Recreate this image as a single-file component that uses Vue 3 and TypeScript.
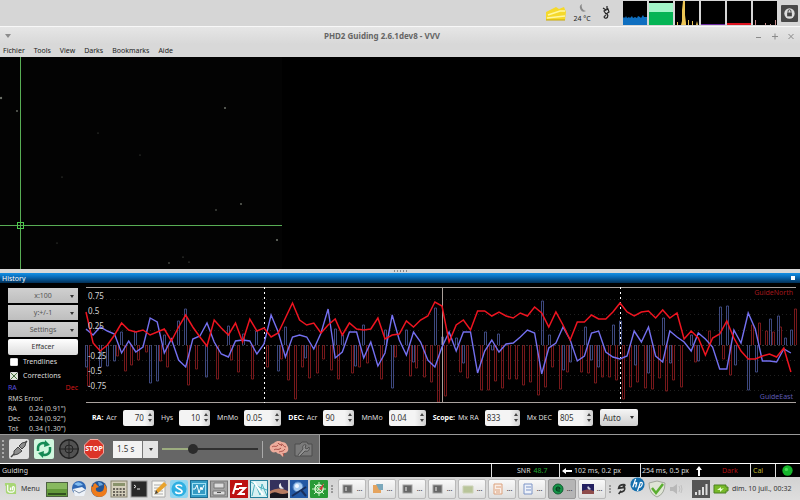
<script setup lang="ts">
import { ref } from 'vue'

type Bar = [x: number, y: number]

const menus = ['Fichier', 'Tools', 'View', 'Darks', 'Bookmarks', 'Aide']

const originX = 6
const step = 7.12
const top = 287
const zero = 345 - top

const decTrace = [
  312, 343, 351, 345, 335, 323, 330, 332, 330, 335, 332, 329, 341, 327, 315, 327, 337, 346, 320, 328,
  335, 323, 342, 319, 331, 328, 337, 333, 318, 303, 320, 325, 323, 333, 325, 319, 335, 323, 329, 330,
  329, 318, 339, 335, 334, 321, 327, 320, 316, 302, 306, 342, 325, 320, 330, 311, 311, 316, 312, 316,
  318, 313, 316, 307, 313, 327, 312, 325, 340, 322, 322, 315, 319, 319, 312, 303, 312, 316, 312, 311,
  318, 310, 318, 313, 339, 331, 338, 355, 338, 334, 321, 338, 351, 359, 359, 356, 354, 357, 348, 372,
]
const raTrace = [
  329, 335, 327, 331, 334, 353, 341, 352, 347, 318, 322, 353, 339, 360, 367, 339, 336, 323, 342, 354,
  357, 341, 340, 341, 354, 344, 315, 332, 357, 337, 335, 337, 349, 333, 309, 358, 352, 332, 332, 358,
  342, 366, 353, 315, 340, 355, 332, 342, 360, 367, 347, 332, 351, 332, 332, 373, 351, 340, 352, 344,
  343, 337, 330, 333, 374, 348, 343, 327, 340, 361, 356, 333, 331, 352, 357, 359, 356, 331, 342, 327,
  356, 362, 331, 337, 342, 351, 333, 339, 347, 369, 369, 330, 343, 313, 329, 361, 361, 362, 349, 353,
]

const decBars: Bar[] = [
  [89, 386], [118, 356], [126, 371], [132, 365], [139, 360], [147, 352], [161, 361], [168, 367], [189, 385],
  [197, 369], [218, 379], [232, 360], [239, 372], [253, 379], [268, 367], [282, 359], [289, 380], [296, 399],
  [303, 367], [310, 378], [318, 373], [324, 359], [332, 370], [339, 379], [353, 373], [360, 367], [368, 363],
  [382, 379], [396, 357], [411, 376], [417, 368], [425, 377], [432, 382], [439, 402], [446, 396], [461, 372],
  [468, 378], [482, 390], [489, 390], [496, 381], [503, 388], [510, 379], [517, 379], [524, 385], [531, 382],
  [539, 395], [546, 387], [553, 367], [561, 389], [568, 372], [582, 372], [589, 373], [596, 383], [603, 377],
  [610, 377], [617, 380], [624, 399], [631, 387], [638, 382], [646, 388], [653, 389], [660, 378], [667, 391],
  [674, 380], [682, 387], [696, 362], [724, 359], [731, 375], [710, 331], [753, 325], [760, 323], [767, 331],
  [774, 332], [781, 327], [796, 309],
]
const raBars: Bar[] = [
  [87, 367], [101, 367], [108, 366], [115, 361], [122, 332], [136, 332], [151, 383], [158, 381], [165, 335],
  [179, 321], [186, 309], [207, 377], [229, 326], [244, 334], [257, 331], [279, 371], [286, 327], [306, 358],
  [336, 329], [343, 335], [356, 366], [364, 325], [386, 330], [393, 388], [407, 330], [414, 362], [436, 308],
  [443, 337], [457, 338], [464, 363], [486, 332], [493, 350], [499, 334], [543, 301], [550, 335], [564, 370],
  [571, 362], [586, 327], [592, 360], [599, 367], [614, 325], [621, 321], [636, 365], [649, 373], [664, 318],
  [671, 363], [692, 335], [699, 361], [721, 307], [728, 306], [736, 365], [749, 390], [757, 372], [771, 319],
  [779, 316], [786, 338], [792, 330],
]

const toPoints = (values: number[]): string =>
  values.map((v, i) => `${(originX + i * step).toFixed(1)},${v - top}`).join(' ')
const barPath = (bars: Bar[]): string =>
  bars.map(([x, y]) => `M${x - 81.5} ${zero}V${y - top}h2V${zero}`).join('')

const gridRows = [12, 27, 43, 73, 88, 103]
const scale = [
  { text: '0.75', row: 1 }, { text: '0.5', row: 2 }, { text: '0.25', row: 3 },
  { text: '-0.25', row: 5 }, { text: '-0.5', row: 6 }, { text: '-0.75', row: 7 },
]

const stars = [
  [1, 41, 1.2], [17, 54, 0.9], [225, 51, 1], [241, 147, 0.9], [216, 153, 0.8], [277, 183, 1.1],
  [169, 206, 0.8], [183, 200, 0.6], [189, 205, 0.6], [98, 76, 0.5], [62, 120, 0.5], [140, 98, 0.5], [57, 186, 0.5],
]

const trendlines = ref(false)
const corrections = ref(true)
const exposure = ref(30)

const rms = [
  ['RA', '0.24 (0.91")'],
  ['Dec', '0.24 (0.92")'],
  ['Tot', '0.34 (1.30")'],
]

const settings = [
  { id: 'ra-agr', group: 'RA:', label: 'Acr', value: '70', size: 'small', right: true },
  { id: 'ra-hys', group: '', label: 'Hys', value: '10', size: 'small', right: true },
  { id: 'ra-min', group: '', label: 'MnMo', value: '0.05', size: 'large', right: false },
  { id: 'dec-agr', group: 'DEC:', label: 'Acr', value: '90', size: 'small', right: false },
  { id: 'dec-min', group: '', label: 'MnMo', value: '0.04', size: 'large', right: false },
  { id: 'mx-ra', group: 'Scope:', label: 'Mx RA', value: '833', size: 'medium', right: false },
  { id: 'mx-dec', group: '', label: 'Mx DEC', value: '805', size: 'medium', right: false },
]

const windows = ['term', 'paint', 'term', 'term', 'folder', 'doc-o', 'doc-b', 'phd', 'moon']
</script>

<template>
  <div class="desktop">
    <header class="panel">
      <svg class="note" viewBox="0 0 22 16"><path d="M1 7 11 2l3 2 5-2 2 5-1 8H1z" fill="#f5d92c" /><path d="M3 10 15 6l5 0M2 13l18-2" stroke="#fff7a0" stroke-width="1.500" fill="none" /><path d="M1 15h19" stroke="#c9a800" /></svg>
      <div class="weather">
        <svg viewBox="0 0 10 10"><path d="M5 1a4 4 0 1 0 4 7A5 5 0 0 1 5 1z" fill="#8b8b8b" /></svg>
        <span>24 °C</span>
      </div>
      <svg class="plug" viewBox="0 0 10 16"><path d="M2 3l3 2M6 1v3M3 6l4-2 1 3-3 2zM6 9c2 2 0 5-2 4s0-3 1-2" fill="none" stroke="#222" stroke-width="1.2" /></svg>
      <div class="monitors">
        <svg viewBox="0 0 24 24"><path d="M0 0h24v24H0z" /><path d="M0 24v-7l1-1 1 1 1-2 1 2 2-1 1 1 2-2 1 2 2-1 2 1 1-2 2 1 1 1 2-3 1 2 2 0 1 0v8z" fill="#0f6fc0" /></svg>
        <svg viewBox="0 0 24 24"><path d="M0 0h24v24H0z" /><path d="M0 2h24v10H0z" fill="#a2f5c8" /><path d="M0 11h24v13H0z" fill="#05b455" /></svg>
        <svg viewBox="0 0 24 24"><path d="M0 0h24v24H0z" /><path d="M2 24v-3h1v3M6 24l1-4V9l1-9h2v14l1 8v2zM13 24v-5h1v5M17 24v-4h1v4M21 24l1-4 1 4z" fill="#edc655" /></svg>
        <svg viewBox="0 0 24 24"><path d="M0 0h24v24H0z" /><path d="M0 23h24v1H0z" fill="#6b2aa0" /></svg>
        <svg viewBox="0 0 24 24"><path d="M0 0h24v24H0z" /><path d="M0 22h24v2H0z" fill="#dd1420" /></svg>
        <svg viewBox="0 0 24 24"><path d="M0 0h24v24H0z" /><path d="M2.500 24v-5M12.500 24v-2M22.500 24v-5M17.500 24v-1" stroke="#c98c8c" /></svg>
      </div>
      <svg class="lock" viewBox="0 0 18 18"><rect width="18" height="18" rx="1" fill="#484848" /><circle cx="9" cy="9" r="5.500" fill="#ddd" /><rect x="6.500" y="8" width="5" height="4" fill="#444" /><path d="M7.500 8V6.500a1.500 1.500 0 0 1 3 0V8" fill="none" stroke="#444" /></svg>
    </header>

    <div class="titlebar">
      <svg class="wm-menu" viewBox="0 0 8 6"><path d="M1 1h6L4 5z" fill="#8c8c8c" /></svg>
      <h1>PHD2 Guiding 2.6.1dev8 - VVV</h1>
      <div class="wm">
        <button aria-label="Réduire"><svg viewBox="0 0 8 8"><path d="M1 5.500h5" /></svg></button>
        <button aria-label="Agrandir"><svg viewBox="0 0 8 8"><path d="M1 4.500h6M4 1.500v6" /></svg></button>
        <button aria-label="Fermer"><svg viewBox="0 0 8 8"><path d="M1.500 2l5 5M6.500 2l-5 5" /></svg></button>
      </div>
    </div>
    <nav class="menubar"><button v-for="m in menus" :key="m">{{ m }}</button></nav>

    <main class="view">
      <svg class="frame" viewBox="0 0 282 212">
        <rect width="282" height="212" fill="#030303" />
        <circle v-for="(s, i) in stars" :key="i" :cx="s[0]" :cy="s[1]" :r="s[2]" fill="#6c7168" />
        <path d="M20.500 0v212M0 168.500h282" stroke="#58ad55" />
        <rect x="17.500" y="165.500" width="6" height="6" fill="none" stroke="#4cc94c" />
      </svg>
    </main>
    <div class="sash"><i></i><i></i><i></i><i></i><i></i></div>

    <section class="history">
      <div class="caption"><h2>History</h2><button class="pin" aria-label="Fermer l'historique"></button></div>
      <div class="body">
        <aside>
          <div class="drop"><select aria-label="Échelle x"><option>x:100</option></select></div>
          <div class="drop"><select aria-label="Échelle y"><option>y:+/-1</option></select></div>
          <div class="drop"><button>Settings</button></div>
          <button class="clear">Effacer</button>
          <label class="tick"><input v-model="trendlines" type="checkbox" />Trendlines</label>
          <label class="tick"><input v-model="corrections" type="checkbox" />Corrections</label>
          <div class="legend"><span class="ra">RA</span><span class="dec">Dec</span></div>
          <div class="rms">RMS Error:</div>
          <div v-for="r in rms" :key="r[0]" class="rms"><span>{{ r[0] }}</span><span>{{ r[1] }}</span></div>
        </aside>
        <div class="plot">
          <div class="graph">
            <svg viewBox="0 0 718 116" preserveAspectRatio="none">
              <path v-for="g in gridRows" :key="g" :d="`M6 ${g}.500H716`" stroke="#202020" stroke-dasharray="1 3" />
              <path :d="`M6 ${zero}.500H716`" stroke="#353535" stroke-dasharray="2 2" />
              <path :d="barPath(decBars)" fill="none" stroke="#831b1e" stroke-width="0.9" />
              <path :d="barPath(raBars)" fill="none" stroke="#44508c" stroke-width="0.9" />
              <path d="M6 .5H716M6 115.500H716" stroke="#a9a29e" />
              <path d="M362.500 0v116" stroke="#aaa09a" />
              <path d="M184.500 0v116M540.500 0v116" stroke="#fff" stroke-dasharray="2 3" />
              <polyline :points="toPoints(raTrace)" fill="none" stroke="#7470f0" stroke-width="1.4" />
              <polyline :points="toPoints(decTrace)" fill="none" stroke="#ee1420" stroke-width="1.5" />
            </svg>
            <div class="scale"><span v-for="s in scale" :key="s.text" :class="'row' + s.row">{{ s.text }}</span></div>
            <span class="north">GuideNorth</span>
            <span class="east">GuideEast</span>
          </div>
          <form class="params" @submit.prevent>
            <div v-for="s in settings" :key="s.id" class="param">
              <label :for="s.id"><b v-if="s.group">{{ s.group }}</b> {{ s.label }}</label>
              <span class="spin" :class="s.size">
                <input :id="s.id" type="text" inputmode="decimal" :value="s.value" :class="{ right: s.right }" />
                <svg viewBox="0 0 8 15"><path d="M2 6l2-3 2 3zM2 9l2 3 2-3z" fill="#444" /></svg>
              </span>
            </div>
            <div class="mode"><select aria-label="Mode Dec"><option>Auto</option></select></div>
          </form>
        </div>
      </div>
    </section>

    <div class="tools">
      <div class="toolbar">
        <i class="grip"></i>
        <button class="tool light" aria-label="Connecter"><svg viewBox="0 0 20 20"><path d="M2 18l4-4M14 6l4-4" stroke="#444" stroke-width="1.500" /><path d="M5 12l4-4 4 4-4 3-4 1zM10 7l3-3 4-1-1 4-3 3z" fill="#8c8c8c" stroke="#444" /></svg></button>
        <button class="tool green" aria-label="Boucle"><svg viewBox="0 0 20 20"><path d="M4 12V9a5 5 0 0 1 8-4M16 8v3a5 5 0 0 1-8 4" fill="none" stroke="#168a55" stroke-width="2.500" /><path d="M11 1l5 5-6 2zM9 19l-5-5 6-2z" fill="#168a55" /></svg></button>
        <button class="tool" aria-label="Guider"><svg viewBox="0 0 20 20"><circle cx="10" cy="10" r="9.300" fill="#525252" stroke="#1f1f1f" stroke-width="1.400" /><circle cx="10" cy="10" r="4" fill="none" stroke="#222" /><path d="M10 1v18M1 10h18" stroke="#222" /></svg></button>
        <button class="tool stop" aria-label="Arrêter"><svg viewBox="0 0 20 20"><path d="M6 .5h8L19.500 6v8L14 19.500H6L.5 14V6z" fill="#dc3428" stroke="#f3aaa0" /></svg><span>STOP</span></button>
        <div class="exposure"><select aria-label="Exposition"><option>1.5 s</option></select></div>
        <input v-model="exposure" class="gamma" type="range" aria-label="Gamma" />
        <i class="sep"></i>
        <button class="tool" aria-label="Paramètres avancés"><svg viewBox="0 0 20 20"><path d="M1 10C0 6 3 5 5 4c3-3 6-2 8-1 4 0 5 3 6 5 1 4-1 6-4 6l-1 4-3-3c-2 0-3-1-4-2-3 1-5 0-6-3z" fill="#edac9c" /><path d="M3 8c2-2 4 1 6-2M5 11c2-2 4 1 7-2M9 4c1 2 3 1 4 3M12 5c3 0 2 3 5 3M10 13c2-1 4 0 6-3M14 14l1 3" fill="none" stroke="#a74c45" /></svg></button>
        <button class="tool" aria-label="Caméra"><svg viewBox="0 0 20 20"><path d="M1 5h5l2-2h5l1 2h4v12H1z" fill="#7a7a7a" stroke="#4d4d4d" /><path d="M4 16l5-6c-1-3 1-5 3-4l-1 3 2 1 2-2c1 3-1 5-4 4l-5 5" fill="#929292" stroke="#505050" /></svg></button>
      </div>
    </div>

    <div class="status">
      <span class="msg">Guiding</span>
      <span class="cell snr">SNR <em>48.7</em></span>
      <span class="cell ramove"><svg viewBox="0 0 10 8"><path d="M0 4l4-3v2h6v2H4v2z" fill="#fff" /></svg>102 ms, 0.2 px</span>
      <span class="cell decmove">254 ms, 0.5 px<svg viewBox="0 0 8 10"><path d="M4 0l3 4H5v6H3V4H1z" fill="#fff" /></svg></span>
      <span class="dark">Dark</span>
      <span class="cell cal">Cal</span>
      <span class="cell led"><svg viewBox="0 0 10 10"><circle cx="5" cy="5" r="4.700" fill="#16b52c" /><circle cx="4" cy="4" r="1.500" fill="#47df55" /></svg></span>
    </div>

    <footer class="taskbar">
      <button class="start"><svg viewBox="0 0 14 14"><path d="M1 1h9a3 3 0 0 1 3 3v9H5a3 3 0 0 1-3-3V4H1z" fill="#a8d675" /><path d="M4 3v6q0 2 2 2h3q2 0 2-2V6q0-1-1-1t-1 1v3M7 9V6" fill="none" stroke="#fff" stroke-width="1.300" /></svg>Menu</button>
      <div class="launchers">
        <button class="wide" aria-label="Bureau"><svg viewBox="0 0 22 18"><rect x=".5" y="2.500" width="21" height="14" fill="#639a3a" stroke="#4d6141" /><path d="M1 3h20v6H1z" fill="#88b95f" /><path d="M2 14h18" stroke="#31511f" stroke-width="2" /></svg></button>
        <button aria-label="Messagerie"><svg viewBox="0 0 18 18"><circle cx="9" cy="8" r="7" fill="#2e67b4" /><path d="M3 9l9-2 4 3-2 6-9 0z" fill="#edf2f8" /><path d="M4 10l5 3 6-3" fill="none" stroke="#7b8ea8" /><path d="M4 4q5-4 9 1l-5 1z" fill="#83bdf0" /></svg></button>
        <button aria-label="Navigateur"><svg viewBox="0 0 18 18"><circle cx="9" cy="9" r="8" fill="#245493" /><path d="M1 6q0 11 8 11t8-8q-1-4-3-5 1 7-4 8-5 0-4-4l3-1-4-4q-2 1-2 4z" fill="#ee7b1b" /><path d="M8 2q4 0 5 3l-4 1z" fill="#69a5dd" /></svg></button>
        <button aria-label="Calculatrice"><svg viewBox="0 0 18 18"><rect x="1" y="1" width="16" height="16" fill="#d6d0bd" stroke="#88836f" /><path d="M3 3h12v3H3z" fill="#8a936c" /><path d="M3 9h12M3 12h12M3 15h12" stroke="#68635a" stroke-width="2" stroke-dasharray="2 1.300" /></svg></button>
        <button aria-label="Terminal"><svg viewBox="0 0 18 18"><rect x="1" y="1" width="16" height="16" fill="#292929" stroke="#9c9c9c" /><path d="M4 5l2 1.500L4 8M7 9h3" fill="none" stroke="#eee" /></svg></button>
        <button aria-label="Éditeur"><svg viewBox="0 0 18 18"><path d="M2 1h13v16H2z" fill="#f8f8f4" stroke="#aaa" /><path d="M4 5h9M4 8h9M4 11h9M4 14h9" stroke="#aaa" /><path d="M5 14l1-4 8-8 3 3-9 8z" fill="#e9a22c" /><path d="M5 14l1-4 2 3z" fill="#444" /></svg></button>
        <button aria-label="Skype"><svg viewBox="0 0 18 18"><rect width="18" height="18" rx="2" fill="#8fd6f0" /><circle cx="9" cy="9" r="7.500" fill="#2fb0e2" /><path d="M12 6.500c-1-2-6-2-6 0s6 2.500 6 5-6 2.500-6.500 0" fill="none" stroke="#fff" stroke-width="1.600" /></svg></button>
        <button aria-label="Moniteur"><svg viewBox="0 0 18 18"><rect x=".5" y=".5" width="17" height="17" fill="#349bc4" stroke="#1d6e93" /><rect x="2.500" y="3.500" width="13" height="11" fill="none" stroke="#9ce0f5" /><path d="M3 9h2l2-4 2 8 2-6 1 3 2-5" fill="none" stroke="#fff" /></svg></button>
        <button aria-label="Fichiers"><svg viewBox="0 0 18 18"><rect x=".5" y="1" width="17" height="16" fill="#a3a3a3" stroke="#777" /><path d="M4 3h10v5H4zM3 11h12v4H3z" fill="#ddd" stroke="#777" /><path d="M7 12.500h4" stroke="#555" /></svg></button>
        <button aria-label="FileZilla"><svg viewBox="0 0 18 18"><rect width="18" height="18" fill="#bd1112" /><path d="M3 14L6 4h6M5 9h4M9 8h6l-6 6h6" fill="none" stroke="#fff" stroke-width="2" /></svg></button>
        <button aria-label="Cartes"><svg viewBox="0 0 18 18"><rect x=".5" y=".5" width="17" height="17" fill="#d9f1f3" stroke="#267f9b" /><path d="M2 16L5 3l5 12L12 4l5 12M1 2l8 5 8 3" fill="none" stroke="#4fb3c0" /><path d="M4 2l9 13" stroke="#fff" stroke-width="2" /></svg></button>
        <button aria-label="Stellarium"><svg viewBox="0 0 18 18"><rect width="18" height="18" fill="#34315d" /><path d="M0 11q9-5 18 0v3H0z" fill="#b67b62" /><path d="M0 14q4-3 8-1t10 0v5H0z" fill="#17151e" /><path d="M11 3a3 3 0 1 0 3 5 4 4 0 0 1-3-5" fill="#eee" /></svg></button>
        <button aria-label="Recherche"><svg viewBox="0 0 18 18"><rect width="18" height="18" fill="#2358a4" /><circle cx="8" cy="7" r="5" fill="#a9ccf1" stroke="#5183c2" /><path d="M2 16l14-9M11 10l5 6" stroke="#182e5c" stroke-width="2" /><circle cx="7" cy="6" r="2" fill="#f2f8ff" /></svg></button>
        <button aria-label="Boussole"><svg viewBox="0 0 18 18"><rect width="18" height="18" rx="1" fill="#289a36" /><circle cx="9" cy="9" r="4" fill="none" stroke="#e4f7df" stroke-width="1.500" /><path d="M9 2v14M2 9h14M4 4l10 10M4 14L14 4" stroke="#c8efc2" /><path d="M9 9l5-6-2 7z" fill="#cf3434" /></svg></button>
      </div>
      <i class="dots"></i>
      <div class="windows">
        <button v-for="(w, i) in windows" :key="i" :class="{ active: w === 'phd' }">
          <svg viewBox="0 0 12 12">
            <g v-if="w === 'term'"><rect x="1" y="2" width="9" height="8" fill="#666" stroke="#a3a3a3" /><path d="M3 4h2v4H3z" fill="#aaa" /></g>
            <g v-else-if="w === 'paint'"><rect x="1" y="2" width="8" height="8" fill="#e5a45f" /><path d="M4 1h7v6H7z" fill="#7ba8bb" /></g>
            <path v-else-if="w === 'folder'" d="M1 3h10v7H1z" fill="#b9c59a" stroke="#ccd2b7" />
            <path v-else-if="w === 'doc-o'" d="M2 1h8v10H2zM4 4h5M3 7h5M4 9h4" fill="#f9eee7" stroke="#dca17c" />
            <path v-else-if="w === 'doc-b'" d="M2 1h8v10H2zM4 4h5M4 7h5" fill="#eef2fa" stroke="#7c94c6" />
            <g v-else-if="w === 'phd'"><circle cx="6" cy="6" r="5" fill="#149447" stroke="#125b31" /><path d="M4 6h4q0-2-2-2T4 6t2 2h2" fill="none" stroke="#05321a" /></g>
            <g v-else><path d="M0 1h12v10H0z" fill="#221f60" /><path d="M0 8q5-3 12 0v3H0z" fill="#8f4d4c" /><path d="M6 3a2 2 0 1 0 3 3" fill="#ccd" /></g>
          </svg>
          <span>...</span>
        </button>
      </div>
      <i class="dots"></i>
      <div class="tray">
        <svg class="sync" viewBox="0 0 12 16"><path d="M10 3Q3 2 2 7l7-1q2 5-6 6M10 3l-3 3M2 14l3-4" fill="none" stroke="#333" stroke-width="2" /></svg>
        <svg class="hp" viewBox="0 0 16 16"><circle cx="8" cy="8" r="7.500" fill="#1470ae" /><path d="M6 2L3 11M5 7q3-2 2 0l-1 4M11 6l-3 9M10.500 6q4-1 2 3-1 2-3 2" fill="none" stroke="#fff" stroke-width="1.300" /></svg>
        <svg class="shield" viewBox="0 0 18 18"><path d="M9 1l8 2q0 11-8 14Q1 14 1 3z" fill="#dfe5d5" stroke="#a1a79a" /><path d="M4 8l4 5 7-9" fill="none" stroke="#59ae2e" stroke-width="2.500" /></svg>
        <svg class="sound" viewBox="0 0 14 14"><path d="M1 5h3l4-3v10L4 9H1z" fill="#b8b8b8" /><path d="M10 4q2 3 0 6M12 3q2 4 0 8" fill="none" stroke="#c0c0c0" /></svg>
        <svg class="net" viewBox="0 0 18 18"><rect width="18" height="18" fill="#555" /><path d="M4 15v-3M7.500 15v-5M11 15V7M14.500 15V4" stroke="#ddd" stroke-width="2" /></svg>
        <svg class="battery" viewBox="0 0 16 10"><path d="M1 1h12v2h2v4h-2v2H1z" fill="#77b929" stroke="#4c8123" /><path d="M4 6l4-3v2l3-1-4 4V6z" fill="#e9ffd0" /></svg>
        <time>dim. 10 juil., 00:32</time>
      </div>
    </footer>
  </div>
</template>

<style>
body { margin: 0; background: #000; }
</style>

<style scoped>
* { box-sizing: border-box; }
.desktop { display: flex; flex-direction: column; min-height: 100vh; background: #000; color: #ddd; font: 7px/10px "Noto Sans", sans-serif; overflow: hidden; }
button, select, input { font: inherit; color: inherit; margin: 0; padding: 0; border: 0; background: none; border-radius: 0; }
select { appearance: none; }
svg { display: block; flex: none; }
h1, h2 { margin: 0; }

.panel { display: flex; align-items: center; justify-content: flex-end; height: 26px; padding-right: 2px; background: #d6d6d6; color: #222; }
.note { width: 22px; height: 20px; margin-right: 4px; }
.weather { display: flex; flex-direction: column; align-items: center; width: 22px; margin-right: 8px; }
.weather svg { width: 10px; height: 12px; }
.plug { width: 10px; height: 16px; margin-right: 12px; }
.monitors { display: flex; gap: 2px; margin-right: 4px; }
.monitors svg { width: 24px; height: 24px; }
.lock { width: 17px; height: 17px; }

.titlebar { display: grid; grid-template-columns: 8px 1fr 48px; align-items: center; height: 18px; padding-left: 4px; background: linear-gradient(#e6e6e6, #d8d8d8); border-top: 1px solid #f8f8f8; color: #656565; }
.titlebar h1 { font-size: 8px; line-height: 12px; text-align: center; }
.wm-menu { width: 8px; height: 6px; }
.wm { display: flex; gap: 8px; justify-content: flex-end; padding-right: 5px; }
.wm button, .wm svg { width: 8px; height: 8px; }
.wm svg { fill: none; stroke: #8a8a8a; }
.menubar { display: flex; gap: 9px; height: 13px; padding: 0 3px; background: #d8d8d8; color: #222; }
.menubar button { line-height: 11px; }

.view { flex: 1; min-height: 212px; background: #000; }
.frame { width: 282px; height: 212px; }
.sash { display: flex; justify-content: center; align-items: center; gap: 2px; height: 4px; background: #d8d8d8; }
.sash i { width: 1px; height: 2px; background: #888; }

.caption { display: flex; align-items: center; justify-content: space-between; height: 10px; padding: 0 5px 0 2px; background: linear-gradient(#1590e4, #086bb8 40%, #022f55); color: #fff; }
.caption h2 { font-size: 7px; line-height: 9px; font-weight: 400; }
.pin { width: 4px; height: 4px; background: #fff; }
.body { display: flex; height: 151px; overflow: hidden; }
aside { flex: none; width: 80px; padding: 5px 2px 0 8px; }
.drop { position: relative; height: 15px; margin-bottom: 2px; background: linear-gradient(#d0d0d0, #bebebe); color: #555; }
.drop select, .drop button { display: block; width: 100%; height: 15px; text-align: center; text-align-last: center; }
.drop::after, .mode::after, .exposure::after { content: ""; position: absolute; right: 4px; top: 7px; border: 2px solid transparent; border-top: 3px solid #333; pointer-events: none; }
.clear { display: block; width: 100%; height: 16px; border-radius: 2px; background: linear-gradient(#fff, #dcdcdc); color: #333; }
.tick { display: flex; align-items: center; gap: 5px; height: 14px; padding-left: 2px; }
.tick input { appearance: none; width: 8px; height: 8px; background: #fff; border: 1px solid #ddd; border-radius: 1px; }
.tick input:checked { background: linear-gradient(45deg, transparent 42%, #476b42 42% 58%, transparent 58%), linear-gradient(-45deg, #dce8d5 42%, #476b42 42% 58%, #dce8d5 58%); }
.legend { display: flex; justify-content: space-between; height: 11px; }
.ra { color: #5850dc; }
.dec { color: #d01818; }
.rms { display: flex; height: 10px; color: #ccc; }
.rms span:first-child { width: 21px; }

.plot { flex: 1; min-width: 0; padding-top: 4px; }
.graph { position: relative; height: 116px; padding-right: 2px; }
.graph svg { width: 100%; height: 116px; }
.scale { position: absolute; left: 8px; top: 1px; display: grid; grid-template-rows: repeat(7, 15px); font-size: 8px; line-height: 15px; color: #d5d5d5; }
.row1 { grid-row: 1; }
.row2 { grid-row: 2; }
.row3 { grid-row: 3; }
.row5 { grid-row: 5; }
.row6 { grid-row: 6; }
.row7 { grid-row: 7; }
.north, .east { position: absolute; right: 7px; }
.north { top: 1px; color: #a0181c; }
.east { bottom: 1px; color: #5f5ab4; }
.params { display: flex; align-items: center; gap: 7px; height: 29px; padding-left: 12px; }
.param { display: flex; align-items: center; gap: 6px; white-space: nowrap; }
.param b { margin-right: 1px; color: #fff; }
.spin { display: flex; height: 16px; border-radius: 2px; background: linear-gradient(90deg, #f4f4f4 70%, #d0d0d0); color: #333; overflow: hidden; }
.spin input { flex: 1; min-width: 0; width: 10px; padding-left: 2px; font-size: 8px; }
.spin input.right { text-align: right; padding-right: 2px; }
.spin svg { width: 8px; height: 15px; }
.small { width: 31px; }
.medium { width: 35px; }
.large { width: 37px; }
.mode { position: relative; width: 38px; height: 17px; border-radius: 2px; background: linear-gradient(#f6f6f6, #cfcfcf); color: #333; }
.mode select { width: 100%; height: 17px; padding-left: 3px; font-size: 8px; }

.tools { border-top: 1px solid #999; border-bottom: 1px solid #fff; }
.toolbar { display: flex; align-items: center; width: 320px; height: 28px; padding-left: 2px; background: #666; border-right: 1px solid #999; }
.grip { width: 3px; height: 18px; margin-right: 4px; border-left: 2px dotted #aaa; }
.tool { position: relative; width: 20px; height: 20px; margin-right: 5px; border-radius: 2px; }
.tool svg { width: 20px; height: 20px; }
.light { background: #e2e2e2; }
.green { background: #d2f7df; }
.stop span { position: absolute; inset: 5px 0; text-align: center; font-weight: 700; color: #fff; }
.exposure { position: relative; flex: none; width: 45px; height: 17px; margin: 0 4px 0 4px; background: linear-gradient(90deg, #f2f2f2 29px, #777 29px 30px, #e5e5e5 30px); color: #333; }
.exposure select { width: 100%; height: 17px; padding-left: 4px; font-size: 8px; }
.exposure::after { right: 5px; }
.gamma { appearance: none; flex: 1; min-width: 0; height: 10px; background: linear-gradient(90deg, #9cac7f 30%, #303030 30%) center / 100% 2px no-repeat; }
.gamma::-webkit-slider-thumb { appearance: none; width: 10px; height: 10px; border-radius: 50%; background: #2b2b2b; }
.sep { width: 1px; height: 17px; margin: 0 6px 0 4px; background: #aaa; }

.status { display: flex; align-items: center; height: 13px; padding-right: 2px; }
.msg { flex: 1; padding-left: 2px; }
.cell { display: flex; align-items: center; height: 13px; border-left: 1px solid #ddd; white-space: nowrap; }
.snr { width: 68px; padding-left: 25px; gap: 3px; }
.snr em { font-style: normal; color: #24a832; }
.ramove { width: 81px; padding-left: 2px; gap: 2px; }
.ramove svg { width: 10px; height: 8px; }
.decmove { width: 78px; padding-left: 1px; gap: 6px; }
.decmove svg { width: 8px; height: 10px; }
.dark { width: 32px; padding-left: 4px; color: #b01212; }
.cal { width: 25px; padding-left: 2px; color: #c3bd35; }
.led { width: 23px; padding-left: 6px; }
.led svg { width: 11px; height: 11px; }

.taskbar { display: flex; align-items: center; height: 23px; padding: 0 5px 0 4px; background: linear-gradient(#d2d2d2, #dedede); color: #333; white-space: nowrap; }
.start { display: flex; flex: none; align-items: center; gap: 4px; width: 42px; }
.start svg { width: 13px; height: 13px; }
.launchers { display: flex; flex: none; gap: 2px; }
.launchers button, .launchers svg { width: 18px; height: 18px; }
.launchers .wide, .launchers .wide svg { width: 22px; }
.dots { flex: none; width: 3px; height: 8px; margin: 0 4px 0 3px; border-left: 2px dotted #999; }
.windows { display: flex; flex: none; gap: 2px; }
.windows button { display: flex; align-items: center; justify-content: center; gap: 3px; width: 28px; height: 20px; border: 1px solid #b9b9b9; border-radius: 2px; background: linear-gradient(#f8f8f8, #dedede); }
.windows button.active { background: #b5b5b5; border-color: #999; }
.windows svg { width: 12px; height: 12px; }
.tray { display: flex; flex: 1; align-items: center; align-self: stretch; justify-content: flex-end; gap: 3px; }
.sync { width: 10px; height: 14px; }
.hp { width: 15px; height: 15px; align-self: flex-start; }
.shield { width: 18px; height: 18px; }
.sound { width: 14px; height: 14px; margin-right: 6px; }
.net { width: 18px; height: 18px; }
.battery { width: 16px; height: 10px; }
time { width: 63px; }
</style>
